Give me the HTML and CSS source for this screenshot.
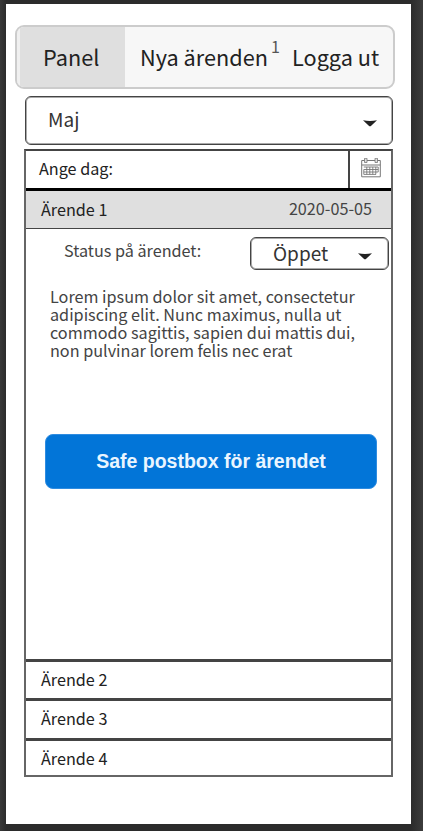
FILE: index.html
```
<!DOCTYPE html>
<html lang="sv">
<head>
<meta charset="utf-8">
<title>Panel</title>
<link rel="stylesheet" href="styles.css">
</head>
<body>
<main class="screen">
  <nav class="nav">
    <a class="tab active">Panel</a>
    <a class="tab new">Nya ärenden<sup>1</sup></a>
    <a class="tab out">Logga ut</a>
  </nav>
  <div class="select month"><span class="value">Maj</span><svg class="caret" viewBox="0 0 14 7"><path d="M0 0.3Q7 1.6 14 0.3L8.2 5.8Q7 6.8 5.8 5.8Z"/></svg></div>
  <section class="cases">
    <div class="day">
      <span>Ange dag:</span>
      <div class="picker">
        <svg class="calendar" viewBox="0 0 20 20" fill="none" stroke="#777">
          <path d="M.7 2.5H19.3V18.8H.7ZM.7 7H19.3"/>
          <path d="M2.8 9H17.2M2.8 11.5H17.2M2.8 14H17.2M2.8 16.4H15M2.8 11.5V16.4M5.8 9V16.4M8.8 9V16.4M11.8 9V16.4M14.8 9V16.4M17.2 9V14" stroke-width=".9"/>
          <path d="M3.5 .3H6V4.5H3.5ZM14 .3H16.5V4.5H14Z" fill="#ddd" stroke-width=".8"/>
        </svg>
      </div>
    </div>
    <div class="case-head"><span>Ärende 1</span><time class="date">2020-05-05</time></div>
    <div class="detail">
      <div class="status"><span>Status på ärendet:</span>
        <div class="select state"><span class="value">Öppet</span><svg class="caret" viewBox="0 0 14 7"><path d="M0 0.3Q7 1.6 14 0.3L8.2 5.8Q7 6.8 5.8 5.8Z"/></svg></div>
      </div>
      <p class="text">Lorem ipsum dolor sit amet, consectetur adipiscing elit. Nunc maximus, nulla ut commodo sagittis, sapien dui mattis dui, non pulvinar lorem felis nec erat</p>
      <button class="postbox">Safe postbox för ärendet</button>
    </div>
    <div class="case">Ärende 2</div>
    <div class="case">Ärende 3</div>
    <div class="case">Ärende 4</div>
  </section>
</main>
</body>
</html>
```
FILE: styles.css
```
* { box-sizing: border-box; }
body {
  margin: 0;
  height: 831px;
  padding: 4px 12px 7px 6px;
  background: linear-gradient(90deg, #383838 0, #2b2b2b 6px, #2b2b2b 411px, #3c3c3c 423px);
  font-family: "Noto Sans CJK SC", sans-serif;
  color: #222;
  overflow: hidden;
}
.screen { height: 820px; background: #fff; padding: 21px 16px 0 9px; }
.nav {
  display: grid;
  grid-template-columns: 108px 158px 1fr;
  height: 64px;
  border: 2px solid #ccc;
  border-radius: 9px;
  background: #f7f7f7;
  font-size: 21.7px;
  line-height: 59px;
  white-space: nowrap;
  overflow: hidden;
}
.active { background: #dfdfdf; border-left: 3px solid #f0f0f0; padding-left: 23px; }
.new { display: flex; padding-left: 15px; }
.new sup { font-size: 16px; line-height: 38px; margin-left: 3px; color: #555; }
.out { padding-left: 9px; }
.select { display: flex; align-items: center; border: 1px solid #444; box-shadow: inset 0 0 0 1px #aaa; border-radius: 6px; background: #fff; color: #333; }
.value { line-height: 28px; }
.caret { width: 14px; height: 7px; margin-left: auto; fill: #222; }
.month { height: 49px; width: 368px; margin: 7px 0 0 10px; padding: 0 15px 0 22px; font-size: 19px; }
.month .value { margin-top: -3px; }
.month .caret { margin-top: 6px; }
.cases { width: 369px; height: 628px; margin: 4px 0 0 9px; border: 2px solid #666; border-top-color: #444; font-size: 16.2px; white-space: nowrap; }
.day { display: flex; justify-content: space-between; height: 37px; padding-left: 13px; line-height: 35px; }
.picker { width: 43px; border-left: 2px solid #444; padding: 7px 0 0 11px; }
.calendar { display: block; width: 20px; height: 20px; }
.case-head { display: flex; justify-content: space-between; height: 41px; border-top: 3px solid #000; border-bottom: 1px solid #444; background: #dfdfdf; padding: 0 19px 0 15px; line-height: 37px; }
.date { color: #444; line-height: 35px; }
.detail { height: 430px; padding-top: 8px; color: #444; }
.status { display: flex; justify-content: space-between; padding: 0 2px 0 38px; height: 33px; line-height: 27px; }
.state { width: 139px; height: 33px; padding: 0 16px 0 22px; font-size: 19px; }
.state .value { margin-top: -2px; }
.state .caret { margin-top: 5px; }
.text { width: 320px; margin: 17px 0 0 24px; line-height: 18px; white-space: normal; }
.postbox { display: block; width: 332px; height: 55px; margin: 75px 0 0 19px; padding: 0; border: 1px solid #2f8ce0; border-radius: 8px; background: #0275d8; color: #eaf5ff; font: bold 19.5px/53px "Liberation Sans", sans-serif; }
.case { height: 39.3px; border-top: 3px solid #444; padding-left: 15px; line-height: 35px; }
```
